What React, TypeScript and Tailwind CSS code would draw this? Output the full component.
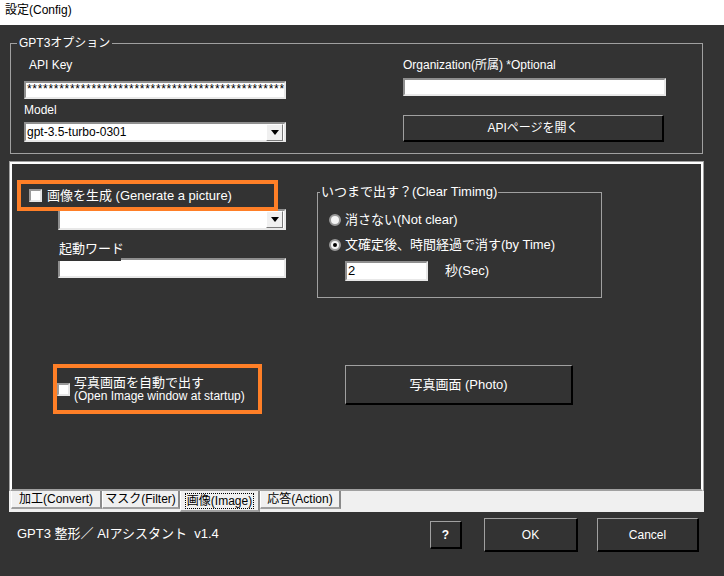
import React from 'react';

const raised =
  'border-t border-l border-r-2 border-b-2 border-t-[#a0a0a0] border-l-[#a0a0a0] border-r-black border-b-black bg-[#333] text-white';
const sunken =
  'border-2 border-t-[#8f8f8f] border-l-[#8f8f8f] border-r-[#e8e8e8] border-b-[#e8e8e8] bg-white text-black';

const DropButton = () => (
  <div className="ml-auto mr-[1px] w-[17px] h-[17px] bg-[#f0f0f0] border border-t-white border-l-white border-r-[#7a7a7a] border-b-[#7a7a7a] flex items-center justify-center">
    <svg width="8" height="5" viewBox="0 0 8 5">
      <path d="M0 0 H8 L4 5 Z" fill="#000" />
    </svg>
  </div>
);

const Checkbox = () => (
  <div className="w-[13px] h-[13px] shrink-0 bg-white border-2 border-t-[#9a9a9a] border-l-[#9a9a9a] border-r-[#e6e6e6] border-b-[#e6e6e6]" />
);

const Radio = ({ checked }: { checked?: boolean }) => (
  <div className="w-[12px] h-[12px] shrink-0 rounded-full bg-[#f4f4f4] border-2 border-[#9a9a9a] flex items-center justify-center">
    {checked && <div className="w-[4px] h-[4px] rounded-full bg-black" />}
  </div>
);

const tabs = [
  { label: '加工(Convert)', w: 'w-[91px]' },
  { label: 'マスク(Filter)', w: 'w-[78px]' },
  { label: '画像(Image)', w: 'w-[80px]', active: true },
  { label: '応答(Action)', w: 'w-[81px]' },
];

export default function App() {
  return (
    <div className="w-[724px] h-[576px] bg-[#333] flex flex-col overflow-hidden text-white font-['Liberation_Sans','Noto_Sans_CJK_JP',sans-serif]">
      {/* title bar */}
      <div className="h-[25px] shrink-0 bg-white text-black text-[12px] leading-[20px] pl-[5px]">設定(Config)</div>

      {/* GPT3 options */}
      <div className="relative mt-[18px] ml-[10px] w-[693px] h-[111px] shrink-0 border border-[#a0a0a0] flex">
        <span className="absolute -top-[8px] left-[6px] px-[2px] bg-[#333] text-[12px] leading-[14px]">GPT3オプション</span>

        <div className="ml-[13px] w-[262px] flex flex-col">
          <span className="mt-[14px] ml-[5px] text-[12px] leading-[14px]">API Key</span>
          <div className={`mt-[9px] h-[18px] ${sunken} text-[12px] leading-[13px] pl-[1px] overflow-hidden whitespace-nowrap tracking-[0.7px]`}>
            {'*'.repeat(48)}
          </div>
          <span className="mt-[4px] text-[12px] leading-[14px]">Model</span>
          <div className={`mt-[5px] h-[20px] ${sunken} flex items-center text-[12px] pl-[1px]`}>
            <span>gpt-3.5-turbo-0301</span>
            <DropButton />
          </div>
        </div>

        <div className="ml-[117px] w-[263px] flex flex-col">
          <span className="mt-[14px] text-[12px] leading-[14px]">Organization(所属) *Optional</span>
          <div className={`mt-[6px] h-[18px] ${sunken}`} />
          <div className={`mt-[19px] h-[27px] w-[261px] ${raised} flex items-center justify-center text-[12px]`}>
            APIページを開く
          </div>
        </div>
      </div>

      {/* tab control */}
      <div className="mt-[7px] ml-[9px] w-[695px] h-[351px] shrink-0 flex flex-col">
        <div className="flex-1 border-t border-l border-r border-[#a0a0a0]">
          <div className="h-full border-t-2 border-l-2 border-r-2 border-white border-b-2 border-b-[#a0a0a0] flex flex-col">
            {/* top section */}
            <div className="flex items-start">
              <div className="ml-[5px] mt-[16px] w-[269px] flex flex-col">
                <div className="relative z-10 w-[261px] h-[31px] border-4 border-[#ff7f27] flex items-center pl-[8px]">
                  <Checkbox />
                  <span className="ml-[5px] text-[13px] leading-[14px] whitespace-nowrap">画像を生成 (Generate a picture)</span>
                </div>
                <div className={`-mt-[2px] ml-[41px] w-[228px] h-[21px] ${sunken} flex items-center`}>
                  <DropButton />
                </div>
                <span className="relative z-10 mt-[12px] ml-[41px] w-[63px] pl-[1px] pb-[6px] bg-[#333] text-[13px] leading-[13px] whitespace-nowrap">起動ワード</span>
                <div className={`-mt-[3px] ml-[41px] w-[228px] h-[20px] ${sunken}`} />
              </div>

              <div className="relative ml-[31px] mt-[28px] w-[285px] h-[106px] border border-[#a0a0a0] flex flex-col">
                <span className="absolute -top-[8px] left-[2px] px-[1px] bg-[#333] text-[13px] leading-[14px] whitespace-nowrap">いつまで出す？(Clear Timimg)</span>
                <div className="mt-[21px] ml-[11px] flex items-center h-[12px]">
                  <Radio />
                  <span className="ml-[4px] text-[13px] leading-[14px] whitespace-nowrap">消さない(Not clear)</span>
                </div>
                <div className="mt-[13px] ml-[11px] flex items-center h-[12px]">
                  <Radio checked />
                  <span className="ml-[4px] text-[13px] leading-[14px] whitespace-nowrap">文確定後、時間経過で消す(by Time)</span>
                </div>
                <div className="mt-[10px] ml-[27px] flex items-center">
                  <div className={`w-[83px] h-[20px] ${sunken} text-[13px] leading-[15px] pl-[1px]`}>2</div>
                  <span className="ml-[17px] text-[13px] leading-[14px]">秒(Sec)</span>
                </div>
              </div>
            </div>

            {/* bottom section */}
            <div className="mt-[66px] flex items-start">
              <div className="ml-[41px] w-[209px] h-[50px] border-4 border-[#ff7f27] flex items-center">
                <Checkbox />
                <div className="ml-[4px] flex flex-col whitespace-nowrap">
                  <span className="text-[13px] leading-[14px]">写真画面を自動で出す</span>
                  <span className="text-[12px] leading-[13px]">(Open Image window at startup)</span>
                </div>
              </div>
              <div className={`ml-[83px] mt-[1px] w-[228px] h-[40px] ${raised} flex items-center justify-center text-[13px]`}>
                写真画面 (Photo)
              </div>
            </div>
          </div>
        </div>

        <div className="h-[21px] shrink-0 bg-[#f0f0f0] flex items-start pl-[2px]">
          {tabs.map(t => (
            <div
              key={t.label}
              className={`${t.w} ${t.active ? 'h-[21px]' : 'h-[18px]'} border-l border-l-white border-r-2 border-r-[#8a8a8a] border-b-2 border-b-[#a0a0a0] text-black text-[12px] flex items-center justify-center whitespace-nowrap`}
            >
              <span className={t.active ? 'outline outline-1 outline-dotted outline-black leading-[14px] px-[1px]' : 'leading-[14px]'}>
                {t.label}
              </span>
            </div>
          ))}
        </div>
      </div>

      {/* footer */}
      <div className="flex items-start">
        <span className="ml-[17px] mt-[15px] w-[413px] text-[13px] leading-[14px]">GPT3 整形／ AIアシスタント&nbsp; v1.4</span>
        <div className={`mt-[9px] w-[32px] h-[28px] ${raised} flex items-center justify-center text-[12px] font-bold`}>?</div>
        <div className={`ml-[22px] mt-[6px] w-[94px] h-[34px] ${raised} flex items-center justify-center text-[12px]`}>OK</div>
        <div className={`ml-[19px] mt-[6px] w-[102px] h-[34px] ${raised} flex items-center justify-center text-[12px]`}>Cancel</div>
      </div>
    </div>
  );
}
